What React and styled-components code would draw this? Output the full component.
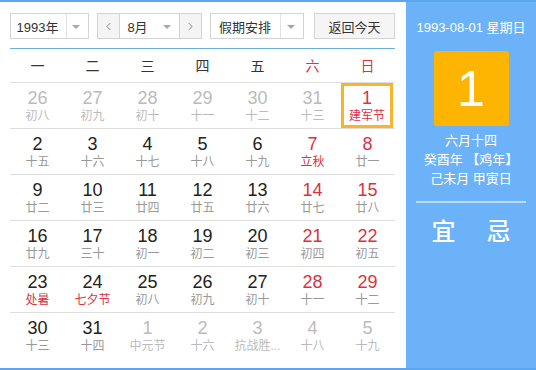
import React from "react";
import styled, { createGlobalStyle } from "styled-components";
import { ChevronLeft, ChevronRight } from "lucide-react";

const GlobalStyle = createGlobalStyle`
  body {
    margin: 0;
    background: #fff;
    font-family: "Liberation Sans", "Noto Sans CJK SC", sans-serif;
  }
`;

const rows = [
  [
    { d: 26, l: "初八", o: true },
    { d: 27, l: "初九", o: true },
    { d: 28, l: "初十", o: true },
    { d: 29, l: "十一", o: true },
    { d: 30, l: "十二", o: true },
    { d: 31, l: "十三", o: true },
    { d: 1, l: "建军节", red: true, hol: true, sel: true },
  ],
  [
    { d: 2, l: "十五" },
    { d: 3, l: "十六" },
    { d: 4, l: "十七" },
    { d: 5, l: "十八" },
    { d: 6, l: "十九" },
    { d: 7, l: "立秋", red: true, hol: true },
    { d: 8, l: "廿一", red: true },
  ],
  [
    { d: 9, l: "廿二" },
    { d: 10, l: "廿三" },
    { d: 11, l: "廿四" },
    { d: 12, l: "廿五" },
    { d: 13, l: "廿六" },
    { d: 14, l: "廿七", red: true },
    { d: 15, l: "廿八", red: true },
  ],
  [
    { d: 16, l: "廿九" },
    { d: 17, l: "三十" },
    { d: 18, l: "初一" },
    { d: 19, l: "初二" },
    { d: 20, l: "初三" },
    { d: 21, l: "初四", red: true },
    { d: 22, l: "初五", red: true },
  ],
  [
    { d: 23, l: "处暑", hol: true },
    { d: 24, l: "七夕节", hol: true },
    { d: 25, l: "初八" },
    { d: 26, l: "初九" },
    { d: 27, l: "初十" },
    { d: 28, l: "十一", red: true },
    { d: 29, l: "十二", red: true },
  ],
  [
    { d: 30, l: "十三" },
    { d: 31, l: "十四" },
    { d: 1, l: "中元节", o: true },
    { d: 2, l: "十六", o: true },
    { d: 3, l: "抗战胜...", o: true },
    { d: 4, l: "十八", o: true },
    { d: 5, l: "十九", o: true },
  ],
];

const weekdays = ["一", "二", "三", "四", "五", "六", "日"];

export default function App() {
  return (
    <>
      <GlobalStyle />
      <Wrapper>
        <Main>
          <Toolbar>
            <Select $width={79} $split={55}>
              <SelectText>1993年</SelectText>
              <Caret />
            </Select>
            <MonthGroup>
              <NavButton>
                <ChevronLeft size={13} strokeWidth={1.4} color="#666" />
              </NavButton>
              <MonthSelect>
                <SelectText>8月</SelectText>
                <Caret />
              </MonthSelect>
              <NavButton>
                <ChevronRight size={13} strokeWidth={1.4} color="#666" />
              </NavButton>
            </MonthGroup>
            <Select $width={94} $split={69}>
              <SelectText>假期安排</SelectText>
              <Caret />
            </Select>
            <TodayButton>返回今天</TodayButton>
          </Toolbar>
          <Divider />
          <WeekHeader>
            {weekdays.map((w, i) => (
              <WeekDay key={w} $red={i > 4}>
                {w}
              </WeekDay>
            ))}
          </WeekHeader>
          {rows.map((row, ri) => (
            <Row key={ri}>
              {row.map((c, ci) => (
                <Cell key={ci} $selected={c.sel}>
                  <DayNum $other={c.o} $red={c.red}>
                    {c.d}
                  </DayNum>
                  <Lunar $other={c.o} $red={c.hol && !c.o}>
                    {c.l}
                  </Lunar>
                </Cell>
              ))}
            </Row>
          ))}
        </Main>
        <Side>
          <DateLine>1993-08-01 星期日</DateLine>
          <BigDay>1</BigDay>
          <LunarInfo>
            <div>六月十四</div>
            <div>癸酉年 【鸡年】</div>
            <div>己未月 甲寅日</div>
          </LunarInfo>
          <SideRule />
          <Advice>
            <span>宜</span>
            <span>忌</span>
          </Advice>
        </Side>
      </Wrapper>
    </>
  );
}

const Wrapper = styled.div`
  display: flex;
  width: 536px;
  height: 370px;
  box-sizing: border-box;
  border-top: 2px solid #5ba6ee;
  border-bottom: 2px solid #5ba6ee;
  overflow: hidden;
`;

const Main = styled.div`
  width: 406px;
  box-sizing: border-box;
  padding: 11px 11px 0 10px;
  background: #fff;
`;

const Toolbar = styled.div`
  display: flex;
  align-items: center;
  height: 26px;
`;

const Select = styled.div`
  position: relative;
  display: flex;
  align-items: center;
  width: ${(p) => p.$width}px;
  height: 26px;
  box-sizing: border-box;
  border: 1px solid #d4d4d4;
  background: #fff;
  margin-right: 8px;
  &::after {
    content: "";
    position: absolute;
    left: ${(p) => p.$split}px;
    top: 0;
    bottom: 0;
    width: 1px;
    background: #e2e2e2;
  }
`;

const SelectText = styled.span`
  flex: 1;
  text-align: center;
  font-size: 13px;
  color: #333;
  padding-right: 24px;
`;

const Caret = styled.span`
  position: absolute;
  right: 8px;
  top: 11px;
  width: 0;
  height: 0;
  border-left: 4px solid transparent;
  border-right: 4px solid transparent;
  border-top: 4px solid #a8a8a8;
`;

const MonthGroup = styled.div`
  display: flex;
  height: 26px;
  box-sizing: border-box;
  border: 1px solid #d4d4d4;
  margin-right: 8px;
`;

const NavButton = styled.div`
  display: flex;
  align-items: center;
  justify-content: center;
  width: 21px;
  background: #f4f4f4;
`;

const MonthSelect = styled.div`
  position: relative;
  display: flex;
  align-items: center;
  width: 59px;
  background: #fff;
  border-left: 1px solid #d4d4d4;
  border-right: 1px solid #d4d4d4;
`;

const TodayButton = styled.div`
  display: flex;
  align-items: center;
  justify-content: center;
  width: 81px;
  height: 26px;
  margin-left: 2px;
  box-sizing: border-box;
  border: 1px solid #d4d4d4;
  background: #f5f5f5;
  font-size: 13px;
  color: #333;
`;

const Divider = styled.div`
  height: 1px;
  margin-top: 9px;
  background: #6aaee6;
`;

const WeekHeader = styled.div`
  display: grid;
  grid-template-columns: repeat(7, 55px);
  height: 33px;
`;

const WeekDay = styled.div`
  text-align: center;
  font-size: 14px;
  line-height: 34px;
  color: ${(p) => (p.$red ? "#d9333f" : "#333")};
`;

const Row = styled.div`
  display: grid;
  grid-template-columns: repeat(7, 55px);
  height: 46px;
  box-sizing: border-box;
  border-top: 1px solid #dedede;
`;

const Cell = styled.div`
  display: flex;
  flex-direction: column;
  align-items: center;
  box-sizing: border-box;
  padding-top: 5px;
  ${(p) =>
    p.$selected &&
    `
    margin: 0 2px 0 1px;
    border: 3px solid #f7b52a;
    padding-top: 2px;
  `}
`;

const DayNum = styled.div`
  font-size: 18px;
  line-height: 20px;
  color: ${(p) => (p.$other ? "#bbb" : p.$red ? "#d9333f" : "#222")};
`;

const Lunar = styled.div`
  font-size: 12px;
  line-height: 17px;
  color: ${(p) => (p.$other ? "#bbb" : p.$red ? "#d9333f" : "#999")};
  white-space: nowrap;
`;

const Side = styled.div`
  flex: 1;
  display: flex;
  flex-direction: column;
  align-items: center;
  background: #6cb2f8;
  color: #fff;
`;

const DateLine = styled.div`
  margin-top: 18px;
  font-size: 13px;
  line-height: 16px;
`;

const BigDay = styled.div`
  display: flex;
  align-items: center;
  justify-content: center;
  width: 75px;
  height: 75px;
  margin-top: 15px;
  border-radius: 3px;
  background: #fdb501;
  font-size: 50px;
  color: #fff;
`;

const LunarInfo = styled.div`
  margin-top: 5px;
  text-align: center;
  font-size: 13px;
  line-height: 19px;
`;

const SideRule = styled.div`
  width: 110px;
  height: 2px;
  margin-top: 13px;
  background: rgba(255, 255, 255, 0.55);
`;

const Advice = styled.div`
  display: flex;
  gap: 31px;
  margin-top: 14px;
  font-size: 24px;
  font-weight: 500;
  line-height: 30px;
`;
